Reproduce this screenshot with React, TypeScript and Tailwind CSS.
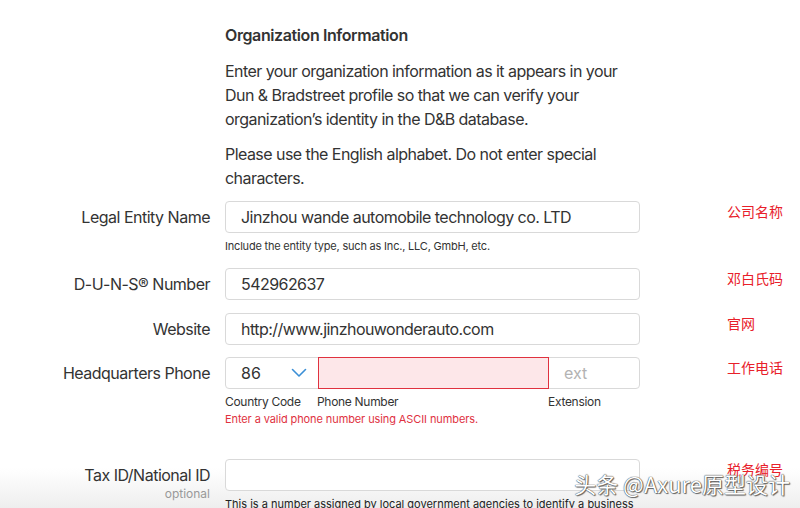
import React from 'react';

const font = { fontFamily: 'Inter, "Noto Sans CJK SC", sans-serif' };

interface RowProps {
  label: string;
  note: string;
  sub?: string;
  children: React.ReactNode;
}

const Row: React.FC<RowProps> = ({ label, note, sub, children }) => (
  <div className="grid grid-cols-[210px_415px_1fr] gap-x-[15px]">
    <div className="flex flex-col items-end">
      <div className="h-[32px] flex items-center text-[16px] tracking-[-0.5px] text-[#333]">{label}</div>
      {sub && <div className="text-[12px] leading-[14px] text-[#999] -mt-[4px]">{sub}</div>}
    </div>
    <div>{children}</div>
    <div className="pl-[72px] text-[14px] leading-[20px] text-[#e8202a] font-['Noto_Sans_CJK_SC']">{note}</div>
  </div>
);

const Field: React.FC<{ value?: string }> = ({ value }) => (
  <div className="h-[32px] border border-[#d9d9d9] rounded-[4px] bg-white flex items-center px-[15px] text-[16px] tracking-[-0.55px] text-[#333]">
    {value}
  </div>
);

export default function App() {
  return (
    <div className="relative w-[800px] h-[508px] bg-white overflow-hidden" style={font}>
      <div className="absolute inset-x-0 bottom-0 h-[40px] bg-gradient-to-b from-[#ffffff00] to-[#eeeeee]" />

      <div className="relative pt-[23px]">
        <div className="pl-[225px] w-[640px]">
          <h2 className="text-[16px] leading-[24px] font-semibold tracking-[-0.4px] text-[#333]">Organization Information</h2>
          <p className="mt-[12px] text-[16px] leading-[24px] tracking-[-0.55px] text-[#333]">
            Enter your organization information as it appears in your Dun &amp; Bradstreet profile so that we can verify your organization’s identity in the D&amp;B database.
          </p>
          <p className="mt-[11px] text-[16px] leading-[24px] tracking-[-0.55px] text-[#333]">
            Please use the English alphabet. Do not enter special characters.
          </p>
        </div>

        <div className="mt-[11px] flex flex-col">
          <Row label="Legal Entity Name" note="公司名称">
            <Field value="Jinzhou wande automobile technology co. LTD" />
            <div className="mt-[6px] text-[11px] leading-[14px] tracking-[-0.2px] text-[#333]">Include the entity type, such as Inc., LLC, GmbH, etc.</div>
          </Row>

          <div className="mt-[15px]">
            <Row label="D-U-N-S® Number" note="邓白氏码">
              <Field value="542962637" />
            </Row>
          </div>

          <div className="mt-[13px]">
            <Row label="Website" note="官网">
              <Field value="http://www.jinzhouwonderauto.com" />
            </Row>
          </div>

          <div className="mt-[12px]">
            <Row label="Headquarters Phone" note="工作电话">
              <div className="h-[32px] flex border border-[#d9d9d9] rounded-[4px]">
                <div className="w-[92px] flex items-center justify-between pl-[15px] pr-[11px] text-[16px] text-[#333]">
                  <span>86</span>
                  <svg width="16" height="10" viewBox="0 0 16 10" fill="none">
                    <path d="M1.5 1.5 8 8l6.5-6.5" stroke="#3b8fd6" strokeWidth="1.6" strokeLinecap="round" strokeLinejoin="round" />
                  </svg>
                </div>
                <div className="w-[231px] -my-px border border-[#e0323f] bg-[#fde7e9]" />
                <div className="flex-1 flex items-center pl-[15px] text-[16px] text-[#b3b3b3]">ext</div>
              </div>
              <div className="mt-[6px] flex text-[12px] leading-[14px] tracking-[-0.3px] text-[#333]">
                <span className="w-[92px]">Country Code</span>
                <span className="w-[231px]">Phone Number</span>
                <span>Extension</span>
              </div>
              <div className="mt-[3px] text-[11px] leading-[14px] tracking-[-0.1px] text-[#e0323f]">Enter a valid phone number using ASCII numbers.</div>
            </Row>
          </div>

          <div className="mt-[33px]">
            <Row label="Tax ID/National ID" note="税务编号" sub="optional">
              <Field />
              <div className="mt-[6px] text-[11px] leading-[14px] text-[#222]">This is a number assigned by local government agencies to identify a business</div>
            </Row>
          </div>
        </div>
      </div>

      <div
        className="absolute right-[10px] bottom-[12px] text-[22px] leading-[26px] text-white font-['Noto_Sans_CJK_SC']"
        style={{ textShadow: '0 0 1px #444, 0 0 1px #444, 1px 1px 1px #666' }}
      >
        头条 @Axure原型设计
      </div>
    </div>
  );
}
